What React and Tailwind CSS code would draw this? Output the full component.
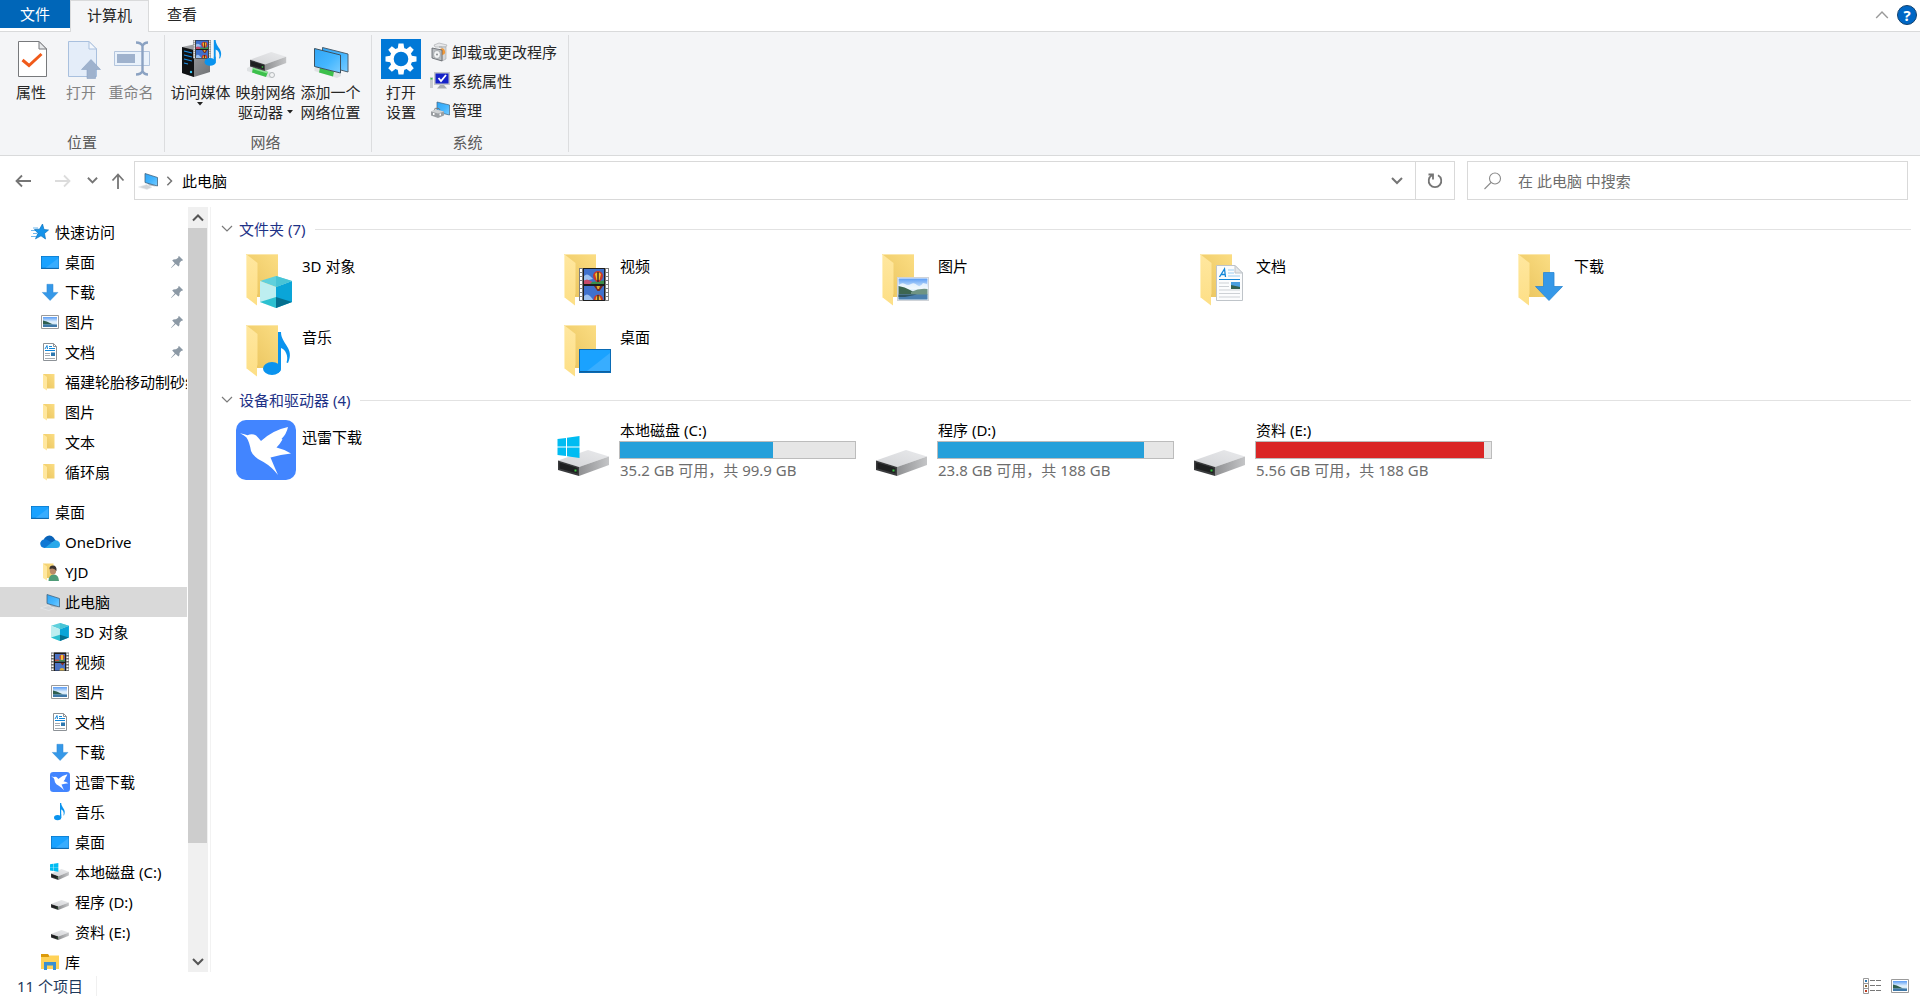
import React from 'react'

/* ---------- shared gradients ---------- */

const Gradients = () => (
  <svg className="absolute w-0 h-0" aria-hidden="true">
    <defs>
      <linearGradient id="folderBack" x1="0" y1="1" x2="1" y2="0">
        <stop offset="0" stopColor="#e9c35c" />
        <stop offset="1" stopColor="#fbdd83" />
      </linearGradient>
      <linearGradient id="folderFlap" x1="0" y1="0" x2="0" y2="1">
        <stop offset="0" stopColor="#ffe79f" />
        <stop offset="1" stopColor="#fddf86" />
      </linearGradient>
      <linearGradient id="screenBlue" x1="0" y1="0" x2="1" y2="1">
        <stop offset="0" stopColor="#31a5f5" />
        <stop offset="0.55" stopColor="#44b6ff" />
        <stop offset="1" stopColor="#7accff" />
      </linearGradient>
      <linearGradient id="driveSide" x1="0" y1="0" x2="1" y2="0">
        <stop offset="0" stopColor="#8f9092" />
        <stop offset="1" stopColor="#c4c5c7" />
      </linearGradient>
      <linearGradient id="driveTop" x1="0" y1="1" x2="1" y2="0">
        <stop offset="0" stopColor="#d3d4d7" />
        <stop offset="1" stopColor="#e9eaec" />
      </linearGradient>
      <linearGradient id="sky" x1="0" y1="0" x2="0" y2="1">
        <stop offset="0" stopColor="#5b9df5" />
        <stop offset="0.5" stopColor="#e4f2fc" />
        <stop offset="1" stopColor="#b8d6ec" />
      </linearGradient>
      <linearGradient id="towerSide" x1="0" y1="0" x2="1" y2="1">
        <stop offset="0" stopColor="#a9abae" />
        <stop offset="1" stopColor="#6f7174" />
      </linearGradient>
    </defs>
  </svg>
)

/* ---------- artwork, each in its own box ---------- */

// 32 x 32
const CubeArt = () => (
  <g>
    <path d="M16 0 32 5 16 11 0 5Z" fill="#5fd0dc" />
    <path d="M0 5 16 11V32L0 26Z" fill="#bdeef0" />
    <path d="M32 5 16 11V32L32 26Z" fill="#0aa5d8" />
    <path d="M16 0 32 5 16 11Z" fill="#48c4d6" />
    <path d="M0 26 16 21V32Z" fill="#2cc0d0" />
    <path d="M32 26 16 21V32Z" fill="#05708f" />
  </g>
)

// 30 x 33
const FilmArt = () => (
  <g>
    <path d="M0 0H30V33H0Z" fill="#7d7d7d" />
    <path d="M4 0H26V33H4Z" fill="#1d1d1d" />
    {[1, 5, 9, 13, 17, 21, 25, 29].map((y) => (
      <path key={y} d={`M1 ${y}h2v3h-2zM27 ${y}h2v3h-2z`} fill="#fff" />
    ))}
    <path d="M5 1H25V16H5ZM5 18H25V32H5Z" fill="#3f70cc" />
    <path d="M5 8Q8 5 11 8T14 11L5 13Z" fill="#9cc0f0" />
    <path d="M5 12.500 8 11.500 13 13.500V16H5Z" fill="#c64a6a" />
    <path d="M13 14 25 12.500V16H11Z" fill="#3a8f4a" />
    <path d="M14 8A5 5 0 0 1 24 8Q24 11 20.500 14H17.500Q14 11 14 8Z" fill="#c9382c" />
    <path d="M16 6Q19 2.500 22 6L20.500 12H17.500Z" fill="#f0c030" />
    <path d="M18.300 4h1.400v10h-1.400z" fill="#2a2320" />
    <path d="M15 18H24L20.500 23H18.500Z" fill="#7a2a20" />
    <path d="M17.500 18H21L20 21H18.500Z" fill="#e0b030" />
    <path d="M5 28Q8 25 11 28T14 32H5Z" fill="#9cc0f0" />
    <path d="M14.500 32A4.700 5.500 0 0 1 24 32Z" fill="#c9382c" />
    <path d="M16.500 32Q17 27.500 19 27.500T22 32Z" fill="#f0c030" />
    <path d="M18.300 27h1.400v5h-1.400z" fill="#2a2320" />
  </g>
)

// 28 x 43
const NoteArt = () => (
  <g fill="#0a93ee">
    <path d="M15 0H18C18 12 32 16 25 31L23.500 30.500C26 24 22 17 18 16V36H15Z" />
    <ellipse cx="9" cy="36.500" rx="9" ry="6.500" />
    <path d="M15 28H18V37Q18 39 15 41Z" />
  </g>
)

// 32 x 24
const DesktopArt = () => (
  <g>
    <path d="M0 0H32V24H0Z" fill="#0a6bb5" />
    <path d="M1 1H31V22H1Z" fill="#1aa2ff" />
    <path d="M31 4V22H8Z" fill="#38adff" />
    <path d="M1 22H31V23H1Z" fill="#0d5f9f" />
  </g>
)

// 32 x 24
const PictureArt = () => (
  <g>
    <path d="M0 0H32V24H0Z" fill="#cfd3d8" />
    <path d="M1 1H31V23H1Z" fill="#fff" />
    <path d="M1.500 1.500H30.500V22.500H1.500Z" fill="url(#sky)" />
    <path d="M2 8Q5 5 8 7T14 7T20 8T26 6L30 7V12H2Z" fill="#f4fafe" opacity="0.8" />
    <path d="M1.500 9Q8 10 13 13T26 17.500H1.500Z" fill="#3d6650" />
    <path d="M14 15Q22 11 30.500 12V18H14Z" fill="#6f9483" />
    <path d="M1.500 17.500H30.500V22.500H1.500Z" fill="#4a7fae" />
    <path d="M1.500 17.500H20L8 20H1.500Z" fill="#2f5664" />
  </g>
)

// 27 x 36
const DocumentArt = () => (
  <g>
    <path d="M0.500 0.500H19L26.500 8V35.500H0.500Z" fill="#fbfcfd" stroke="#bfc4c9" />
    <path d="M19 0.500V8H26.500Z" fill="#e4e7ea" stroke="#bfc4c9" />
    <path d="M3.500 12 8.500 4 9.500 12M5 9.500H9.500" fill="none" stroke="#1286d8" strokeWidth="1.300" />
    <path d="M12 5H18M12 8H18M12 11H24" stroke="#9ccdf0" />
    <path d="M3 14.500H24" stroke="#1286d8" />
    <path d="M3 18H13M3 21.500H13M3 25H24M3 28.500H24M3 32H24" stroke="#cdd1d5" />
    <path d="M15 17H24V24H15Z" fill="#4b9fe0" />
    <path d="M15 20 24 22V24H15Z" fill="#33604f" />
  </g>
)

// 28 x 29
const DownloadArt = () => (
  <path d="M8.500 0.500H19V14.500H27.500L14 28.500 0.500 14.500H8.500Z" fill="#3598e8" stroke="#2a86d2" strokeWidth="0.800" />
)

// 52 x 26
const DriveArt = () => (
  <g>
    <path d="M0 10.500 30 0 51 6.500 21 17Z" fill="url(#driveTop)" />
    <path d="M21 17 51 6.500V15L21 26Z" fill="url(#driveSide)" />
    <path d="M0 10.500 21 17V26L0 20Z" fill="#3a3b3d" />
    <path d="M1.500 12.500 19.500 18V23.500L1.500 18.500Z" fill="#1e1f20" />
    <path d="M16.500 19.500h2v2h-2z" fill="#36c440" />
  </g>
)

// 22 x 22
const WindowsArt = () => (
  <path d="M0 3 8.500 2V10.500H0ZM9.500 1.800 22 0V10.500H9.500ZM0 11.500H8.500V20L0 19ZM9.500 11.500H22V22L9.500 20.200Z" fill="#00bcf2" />
)

// 60 x 60
const ThunderArt = () => (
  <g>
    <rect width="60" height="60" rx="10" fill="#4285ff" />
    <path
      d="M4 13.300Q9 14.500 11.500 15.200 18 12.500 22 17.500L25 21Q37 10 52 7 50.500 14 45.500 19L46.500 19.500Q44 24 40.500 27.500 49 29.500 55 33.500 45 34.500 34.500 37.500 38 46 42 55 36 47 27.500 42 17 37 15 31 13.500 22 10.500 17.500 8 15 4 13.300Z"
      fill="#fff"
    />
  </g>
)

// 60 x 60
const FolderArt = () => (
  <g>
    <path d="M10 5H42V48H20Z" fill="url(#folderBack)" />
    <path d="M10 5.500H42" stroke="#fbe7ab" />
    <path d="M10 5 21.500 14V45L21 46V56.500L10 48Z" fill="url(#folderFlap)" />
    <path d="M10.500 6V48" stroke="#fff0bf" />
  </g>
)

// 20 x 20
const ComputerArt = () => (
  <g>
    <path d="M0.500 16 8.700 13.500 14 16.300 9 18.500Z" fill="#d0d4d8" stroke="#e9ebed" strokeWidth="0.600" />
    <path d="M9 11.500 15 13.500 18 15.500 11 14.500Z" fill="#b7bcc2" />
    <path d="M7 2.500 19.500 6.500V15L7 11.500Z" fill="url(#screenBlue)" stroke="#44657f" strokeWidth="0.800" />
  </g>
)

/* ---------- folder + overlay, 60px ---------- */

const overlays = {
  cube: <g transform="translate(24 27)"><CubeArt /></g>,
  film: <g transform="translate(25 19)"><FilmArt /></g>,
  picture: <g transform="translate(25 28)"><PictureArt /></g>,
  document: <g transform="translate(26 16)"><DocumentArt /></g>,
  download: <g transform="translate(27 23)"><DownloadArt /></g>,
  note: <g transform="translate(27 12)"><NoteArt /></g>,
  desktop: <g transform="translate(25 29)"><DesktopArt /></g>,
}

const Tile = ({ kind }) => (
  <svg viewBox="0 0 60 60" className="w-[60px] h-[60px] shrink-0">
    {kind === 'thunder' && <ThunderArt />}
    {kind === 'drive' && <g transform="translate(4 30)"><DriveArt /></g>}
    {kind === 'system' && (
      <g>
        <g transform="translate(4 30)"><DriveArt /></g>
        <g transform="translate(3.500 16)"><WindowsArt /></g>
      </g>
    )}
    {overlays[kind] && (
      <g>
        <FolderArt />
        {overlays[kind]}
      </g>
    )}
  </svg>
)

/* ---------- 20px tree icons ---------- */

const treeArt = {
  star: (
    <g>
      <path d="M3 6H8M1 8.500H6M3 11.500H7M1 14.500H6" stroke="#6fb8ee" strokeWidth="1.200" />
      <path d="M12.500 2 14 7.500 18.500 8 14.500 11.500 15.500 17 11 13.800 5.500 16.800 8 11.300 4.500 7.500 9.500 7.200Z" fill="#1593ea" stroke="#0b72be" strokeWidth="0.700" />
    </g>
  ),
  desktop: <g transform="translate(1 4) scale(0.560 0.540)"><DesktopArt /></g>,
  download: <g transform="translate(2 2) scale(0.580 0.580)"><DownloadArt /></g>,
  picture: (
    <g>
      <path d="M1.500 3.500H18.500V16.500H1.500Z" fill="#fff" stroke="#9a9a9a" />
      <path d="M3 5H17V15H3Z" fill="url(#sky)" />
      <path d="M3 8.500Q7 9 10 11T17 12.500H3Z" fill="#2f5f50" />
      <path d="M3 12.500H17V15H3Z" fill="#3e78a8" />
    </g>
  ),
  document: (
    <g>
      <path d="M3.500 1.500H13.500L16.500 4.500V18.500H3.500Z" fill="#fff" stroke="#8d9297" />
      <path d="M13.500 1.500V4.500H16.500" fill="none" stroke="#8d9297" />
      <path d="M5 7 7 3.500 7.500 7M9 4.500H12M9 6.500H15M5 8.500H15" fill="none" stroke="#1286d8" />
      <path d="M5 11.500H10M5 13.500H10M5 16.500H15" stroke="#a5abb1" />
      <path d="M11 10.500h4v3.500h-4z" fill="#2d78b0" />
    </g>
  ),
  folder: (
    <g>
      <path d="M3 2H14.500V16.500H7Z" fill="url(#folderBack)" />
      <path d="M3 2 7 5V18.500L3 16Z" fill="#ffe79f" />
    </g>
  ),
  cloud: (
    <g>
      <path d="M4 10.500A5.500 5.500 0 0 1 13.500 5.500L16 9 6 13Z" fill="#0a63b8" />
      <path d="M4.500 16A4.400 4.400 0 1 1 6.500 7.600L14 12 11 16Z" fill="#0f78d4" />
      <path d="M6 15 13.500 9.300A4 4 0 0 1 20 12.500Q20 16 16.500 16H4.500Z" fill="#28a8ea" />
    </g>
  ),
  user: (
    <g>
      <path d="M3 1.500H13.500V16H7Z" fill="url(#folderBack)" />
      <path d="M3 1.500 7 4.500V18.500L3 16Z" fill="#ffe79f" />
      <path d="M8.500 19Q8.500 13 13.500 12.500T19 19Z" fill="#4f9c78" />
      <ellipse cx="13" cy="8.500" rx="3.200" ry="4" fill="#b98a68" />
      <path d="M9.500 7.500Q9 3.500 13 3.500T16.500 9Q15 6.500 12.500 6.500T9.500 7.500Z" fill="#3b3330" />
    </g>
  ),
  computer: <ComputerArt />,
  cube: <g transform="translate(1 1) scale(0.560 0.560)"><CubeArt /></g>,
  film: (
    <g>
      <path d="M1 0.500H19V19H1Z" fill="#6f6f6f" />
      <path d="M4 0.500H16V19H4Z" fill="#1d1d1d" />
      {[1.5, 4.5, 7.5, 10.5, 13.5, 16.5].map((y) => (
        <path key={y} d={`M1.500 ${y}h2v1.600h-2zM16.500 ${y}h2v1.600h-2z`} fill="#fff" />
      ))}
      <path d="M5 2H15V9.500H5ZM5 11H15V18.500H5Z" fill="#4a72c4" />
      <path d="M5 8H15V9.500H5Z" fill="#4a8a4a" />
      <path d="M5 7.500H9V9H5Z" fill="#c8503c" />
      <circle cx="12" cy="5" r="2.600" fill="#c8502c" />
      <path d="M11 3h2v5h-2z" fill="#ecc23a" />
      <path d="M10.500 11H14.500L12.500 13.500Z" fill="#8a3020" />
      <path d="M9.500 18.500A2.500 2.500 0 0 1 14.500 18.500Z" fill="#e0b030" />
    </g>
  ),
  thunder: <g transform="scale(0.333)"><ThunderArt /></g>,
  note: <g transform="translate(4 1) scale(0.400 0.400)"><NoteArt /></g>,
  system: (
    <g>
      <g transform="translate(1 7) scale(0.350 0.420)"><DriveArt /></g>
      <g transform="translate(0 1) scale(0.380 0.400)"><WindowsArt /></g>
    </g>
  ),
  drive: <g transform="translate(1 8) scale(0.350 0.380)"><DriveArt /></g>,
  library: (
    <g>
      <path d="M1 2H8L9.500 4H12V8H1Z" fill="#dc9a0a" />
      <path d="M1 5H8.500L10 3.500H19V17H1Z" fill="#ffd257" />
      <path d="M4 10H16V18H13V13.500H7V18H4Z" fill="#3a8fd2" />
    </g>
  ),
}

const TreeIcon = ({ kind }) => (
  <svg viewBox="0 0 20 20" className="w-5 h-5 shrink-0">{treeArt[kind]}</svg>
)

const Pin = () => (
  <svg viewBox="0 0 14 14" className="w-[14px] h-[14px] mr-[3px] shrink-0">
    <path d="M9 1 13 5 12 6 11.300 5.700 9.500 8Q10 10.500 8.500 11.500L5.700 9 1.300 13 1 12.700 4.800 8.200 2.200 5.500Q3.500 4 6 4.300L8.500 2.600 8 2Z" fill="#8c99a5" />
  </svg>
)

const Chevron = ({ className, d = 'M1 3 6 8 11 3', width = '1.500' }) => (
  <svg viewBox="0 0 12 12" className={className} fill="none" stroke="currentColor" strokeWidth={width}>
    <path d={d} />
  </svg>
)

const DropArrow = () => (
  <svg viewBox="0 0 6 4" className="w-[6px] h-1 shrink-0">
    <path d="M0 0H6L3 3.500Z" fill="#222" />
  </svg>
)

/* ---------- ribbon ---------- */

const ribbonArt = {
  properties: (
    <g>
      <path d="M7.500 2.500H28L35.500 10V37.500H7.500Z" fill="#fff" stroke="#77797c" />
      <path d="M28 2.500V10H35.500Z" fill="#e8eaec" stroke="#77797c" />
      <path d="M11.500 21 18 26.500 30.500 15" fill="none" stroke="#f05a1a" strokeWidth="3" />
    </g>
  ),
  open: (
    <g>
      <path d="M7.500 2.500H28L35.500 10V37.500H7.500Z" fill="#e4edf9" stroke="#a9c0de" />
      <path d="M28 2.500V10H35.500Z" fill="#f4f8fd" stroke="#a9c0de" />
      <path d="M30 20.500 39.500 30.500H34.500V39.500H26V30.500H20.500Z" fill="#9fb2cd" stroke="#8ba2c2" strokeWidth="0.600" />
    </g>
  ),
  rename: (
    <g>
      <path d="M3.500 12.500H38.500V26.500H3.500Z" fill="#eaf2fb" stroke="#b3c5dd" />
      <path d="M6 15H24V24H6Z" fill="#9fb2cd" />
      <path d="M25 3.500Q30 3.500 31.500 7 33 3.500 37 3.500M31.500 6V33M25 35.500Q30 35.500 31.500 32 33 35.500 37 35.500" fill="none" stroke="#8ba2c2" strokeWidth="2.400" />
    </g>
  ),
  media: (
    <g>
      <path d="M1 8 15 5 29 8V33L13 38 1 34Z" fill="url(#towerSide)" />
      <path d="M1 8 13 11V38L1 34Z" fill="#101214" />
      <path d="M3 12 11 14M3 16 11 18M3 20 11 22M3 24 7 25" stroke="#1e8fe8" strokeWidth="1.200" />
      <circle cx="10" cy="33" r="1.200" fill="#3ac8f5" />
      <g transform="translate(12 1) scale(0.600 0.560)"><FilmArt /></g>
      <g transform="translate(23.500 1) scale(0.620 0.600)"><NoteArt /></g>
    </g>
  ),
  netDrive: (
    <g>
      <path d="M1 29 5 27 28 34V38L24 39 1 32Z" fill="#dfe2e4" />
      <path d="M7 28.500 22 33 20 38 6 33.500Z" fill="#3cc04b" />
      <path d="M7 28.500 22 33 21.500 34.500 6.500 30Z" fill="#8ee296" />
      <circle cx="26" cy="36" r="2.500" fill="#f2f3f4" stroke="#b5b9bc" />
      <g transform="translate(4 13) scale(0.710 0.730)"><DriveArt /></g>
    </g>
  ),
  netPlace: (
    <g>
      <path d="M11.500 8.500 37 15V33L11.500 26Z" fill="url(#screenBlue)" stroke="#4b5f6e" />
      <path d="M3.500 29 8 27 30 34V37L26 39 3.500 32Z" fill="#dfe2e4" />
      <path d="M9 28.500 23 32.500 22 37.500 8 33.500Z" fill="#3cc04b" />
      <path d="M3.500 9.500 29.500 16V34L3.500 27.500Z" fill="url(#screenBlue)" stroke="#3d5260" />
    </g>
  ),
  settings: (
    <g>
      <path d="M0 0H40V40H0Z" fill="#0078d7" />
      {[0, 45, 90, 135, 180, 225, 270, 315].map((a) => (
        <path key={a} d="M17.500 4.500H22.500L23.500 11H16.500Z" transform={`rotate(${a} 20 20)`} fill="#fff" />
      ))}
      <circle cx="20" cy="20" r="9.300" fill="none" stroke="#fff" strokeWidth="4" />
    </g>
  ),
  uninstall: (
    <g>
      <path d="M4 3 9 1 17 3 16 5H5Z" fill="#e7e8ea" stroke="#a3a6a9" strokeWidth="0.600" />
      <path d="M9 5H16V17L12 19V5Z" fill="#d5d7d9" stroke="#a3a6a9" strokeWidth="0.600" />
      <path d="M10 7Q14 5 15 9T11 13Z" fill="#f29a3a" />
      <path d="M2 6 12 8V19L2 16Z" fill="#b9bdc1" stroke="#5c6064" strokeWidth="0.800" />
      <ellipse cx="7" cy="12.500" rx="3.400" ry="4" fill="#f2f4f5" stroke="#8a8e92" strokeWidth="0.600" />
      <circle cx="7" cy="12.500" r="1" fill="#8a8e92" />
    </g>
  ),
  sysProps: (
    <g>
      <path d="M0 6H3V17H0Z" fill="#c9cccf" />
      <path d="M0.500 7h2v1.500h-2z" fill="#3cc04b" />
      <path d="M4 1H20V14H4Z" fill="#c3c6c9" />
      <path d="M5.500 2.500H18.500V12.500H5.500Z" fill="#1522c8" />
      <path d="M8.500 7 11 10 16 4" fill="none" stroke="#fff" strokeWidth="1.800" />
      <path d="M10 14H14L17 17.500H7Z" fill="#a9adb1" />
    </g>
  ),
  manage: (
    <g>
      <path d="M7 2 19.500 5V15L7 12Z" fill="url(#screenBlue)" stroke="#44657f" strokeWidth="0.700" />
      <path d="M1 11.500 6 9.500 14 11.500V15.500L8 18 1 15.500Z" fill="#9b9fa3" />
      <path d="M1 11.500 6 9.500 14 11.500 8 13.500Z" fill="#cfd2d4" />
      <path d="M4 9.500Q5 7.500 9 8.500L10 10" fill="none" stroke="#73777b" />
      <path d="M3 13h1.500v2h-1.500zM9.500 13.500h1.500v2h-1.500z" fill="#fff" />
    </g>
  ),
}

const RibbonIcon = ({ kind }) => (
  <svg viewBox="0 0 40 40" className="w-10 h-10 overflow-visible">{ribbonArt[kind]}</svg>
)

const RibbonButton = ({ kind, width, lines, arrow, disabled }) => (
  <button
    disabled={disabled}
    className={`${width} flex flex-col items-center gap-[3px] leading-5 whitespace-nowrap ${disabled ? 'text-[#838383]' : 'text-[#262626]'}`}
  >
    <RibbonIcon kind={kind} />
    <span className="flex flex-col items-center">
      {lines.map((line, i) => (
        <span key={line} className="flex items-center gap-1">
          {line}
          {arrow === 'inline' && i === lines.length - 1 && <DropArrow />}
        </span>
      ))}
      {arrow === 'below' && <DropArrow />}
    </span>
  </button>
)

const RibbonGroup = ({ label, className, children }) => (
  <section className={`flex flex-col justify-between border-r border-[#dcdddf] my-[3px] pt-1 ${className}`}>
    <div className="flex items-start">{children}</div>
    <div className="text-center leading-5 text-[#5a5a5a]">{label}</div>
  </section>
)

const systemTools = [
  { kind: 'uninstall', label: '卸载或更改程序' },
  { kind: 'sysProps', label: '系统属性' },
  { kind: 'manage', label: '管理' },
]

const Ribbon = () => (
  <div className="flex h-[124px] shrink-0 bg-[#f4f5f7] border-b border-[#d9dadb]">
    <RibbonGroup label="位置" className="w-[165px] px-[6px]">
      <RibbonButton kind="properties" width="w-[50px]" lines={['属性']} />
      <RibbonButton kind="open" width="w-[50px]" lines={['打开']} disabled />
      <RibbonButton kind="rename" width="w-[50px]" lines={['重命名']} disabled />
    </RibbonGroup>
    <RibbonGroup label="网络" className="w-[207px] pl-[3px] pr-2">
      <RibbonButton kind="media" width="w-[65px]" lines={['访问媒体']} arrow="below" />
      <RibbonButton kind="netDrive" width="w-[65px]" lines={['映射网络', '驱动器']} arrow="inline" />
      <RibbonButton kind="netPlace" width="w-[65px]" lines={['添加一个', '网络位置']} />
    </RibbonGroup>
    <RibbonGroup label="系统" className="w-[197px] pl-[3px] pr-2">
      <RibbonButton kind="settings" width="w-[52px]" lines={['打开', '设置']} />
      <div className="flex flex-col ml-[3px] -mt-0.5">
        {systemTools.map((tool) => (
          <button key={tool.kind} className="flex items-center gap-[2px] h-[29px] leading-5 text-[#262626] whitespace-nowrap">
            <svg viewBox="0 0 20 20" className="w-5 h-5">{ribbonArt[tool.kind]}</svg>
            {tool.label}
          </button>
        ))}
      </div>
    </RibbonGroup>
  </div>
)

const TabBar = () => (
  <div className="flex h-8 shrink-0 leading-5 border-b border-[#d9dadb]">
    <button className="w-[70px] h-7 bg-[#0066b8] text-white">文件</button>
    <button className="w-[79px] h-8 pb-1 bg-[#f4f5f7] border-x border-t border-[#d9dadb] text-[#262626]">计算机</button>
    <button className="w-[66px] h-[31px] pb-1 text-[#262626]">查看</button>
    <div className="ml-auto flex items-center gap-2 h-[30px] pr-[3px]">
      <button aria-label="最小化功能区" className="text-[#9a9a9a]">
        <Chevron className="w-[14px] h-[14px]" d="M1 8.500 6 3.500 11 8.500" width="1.200" />
      </button>
      <button className="w-5 h-5 rounded-full bg-[#0067c5] border border-[#12416e] text-white text-[15px] leading-4 font-bold">?</button>
    </div>
  </div>
)

/* ---------- address row ---------- */

const Arrow = ({ d, className }) => (
  <svg viewBox="0 0 16 16" className={className} fill="none" stroke="currentColor" strokeWidth="1.800">
    <path d={d} />
  </svg>
)

const AddressRow = () => (
  <div className="flex items-center h-[39px] mt-[5px] shrink-0 pr-3 text-[#757575]">
    <div className="flex items-center w-[134px] pl-[15px] shrink-0">
      <button aria-label="后退"><Arrow className="w-4 h-4" d="M16 8H1.500M7 2.500 1.500 8 7 13.500" /></button>
      <button aria-label="前进" className="ml-6 text-[#dcdcdc]"><Arrow className="w-4 h-4" d="M0 8H14.500M9 2.500 14.500 8 9 13.500" /></button>
      <button aria-label="最近" className="ml-4"><Chevron className="w-[11px] h-[11px]" width="2" /></button>
      <button aria-label="上移" className="ml-3"><Arrow className="w-4 h-4" d="M8 16V1.500M2.500 7.500 8 1.500 13.500 7.500" /></button>
    </div>
    <div className="flex flex-1 items-center h-full border border-[#d9d9d9]">
      <div className="flex flex-1 items-center pl-[3px]">
        <TreeIcon kind="computer" />
        <Chevron className="w-[10px] h-[10px] ml-[6px]" d="M4 1 9 6 4 11" width="1.800" />
        <span className="ml-[8px] text-black">此电脑</span>
      </div>
      <button aria-label="展开" className="px-3"><Chevron className="w-3 h-3" width="2" /></button>
      <button aria-label="刷新" className="flex items-center justify-center w-[39px] h-full border-l border-[#d9d9d9]">
        <svg viewBox="0 0 16 16" className="w-4 h-4" fill="none" stroke="currentColor" strokeWidth="1.800">
          <path d="M11 2.300A6.300 6.300 0 1 1 5 2.300M1.500 1.500H6V6.500" />
        </svg>
      </button>
    </div>
    <label className="flex items-center w-[441px] h-full ml-3 pl-4 border border-[#d9d9d9]">
      <svg viewBox="0 0 18 18" className="w-[18px] h-[18px] mr-4 shrink-0" fill="none" stroke="#8a8a8a" strokeWidth="1.100">
        <circle cx="11" cy="6.500" r="5.500" />
        <path d="M7 10.500 0.500 17" />
      </svg>
      <input type="search" aria-label="搜索" placeholder="在 此电脑 中搜索" className="flex-1 min-w-0 bg-transparent outline-none placeholder:text-[#6d6d6d]" />
    </label>
  </div>
)

/* ---------- navigation tree ---------- */

const quickAccess = [
  { label: '快速访问', icon: 'star', level: 0 },
  { label: '桌面', icon: 'desktop', level: 1, pinned: true },
  { label: '下载', icon: 'download', level: 1, pinned: true },
  { label: '图片', icon: 'picture', level: 1, pinned: true },
  { label: '文档', icon: 'document', level: 1, pinned: true },
  { label: '福建轮胎移动制砂线', icon: 'folder', level: 1 },
  { label: '图片', icon: 'folder', level: 1 },
  { label: '文本', icon: 'folder', level: 1 },
  { label: '循环扇', icon: 'folder', level: 1 },
]

const desktopTree = [
  { label: '桌面', icon: 'desktop', level: 0 },
  { label: 'OneDrive', icon: 'cloud', level: 1 },
  { label: 'YJD', icon: 'user', level: 1 },
  { label: '此电脑', icon: 'computer', level: 1, selected: true },
  { label: '3D 对象', icon: 'cube', level: 2 },
  { label: '视频', icon: 'film', level: 2 },
  { label: '图片', icon: 'picture', level: 2 },
  { label: '文档', icon: 'document', level: 2 },
  { label: '下载', icon: 'download', level: 2 },
  { label: '迅雷下载', icon: 'thunder', level: 2 },
  { label: '音乐', icon: 'note', level: 2 },
  { label: '桌面', icon: 'desktop', level: 2 },
  { label: '本地磁盘 (C:)', icon: 'system', level: 2 },
  { label: '程序 (D:)', icon: 'drive', level: 2 },
  { label: '资料 (E:)', icon: 'drive', level: 2 },
  { label: '库', icon: 'library', level: 1 },
]

const indent = ['pl-[30px]', 'pl-[40px]', 'pl-[50px]']

const TreeRow = ({ item }) => (
  <li>
    <a href="#" className={`flex items-center h-[30px] gap-[5px] ${indent[item.level]} ${item.selected ? 'bg-[#d9d9d9]' : ''}`}>
      <TreeIcon kind={item.icon} />
      <span className="flex-1 min-w-0 overflow-hidden whitespace-nowrap">{item.label}</span>
      {item.pinned && <Pin />}
    </a>
  </li>
)

const Sidebar = () => (
  <div className="flex w-[211px] shrink-0 border-r border-[#f2f2f2]">
    <nav className="w-[187px] overflow-hidden pt-[10px] text-black">
      <ul>{quickAccess.map((item, i) => <TreeRow key={i} item={item} />)}</ul>
      <ul className="mt-[10px]">{desktopTree.map((item, i) => <TreeRow key={i} item={item} />)}</ul>
    </nav>
    <div className="flex flex-col w-5 ml-px bg-[#f0f0f0] text-[#555]">
      <div className="flex items-center justify-center h-[21px] shrink-0"><Chevron className="w-3 h-3" d="M1 8.500 6 3.500 11 8.500" width="2" /></div>
      <div className="flex flex-col flex-1 min-h-0">
        <div className="h-[85%] bg-[#cdcdcd] mr-px" />
      </div>
      <div className="flex items-center justify-center h-[21px] shrink-0"><Chevron className="w-3 h-3" width="2" /></div>
    </div>
  </div>
)

/* ---------- content ---------- */

const folders = [
  { label: '3D 对象', icon: 'cube' },
  { label: '视频', icon: 'film' },
  { label: '图片', icon: 'picture' },
  { label: '文档', icon: 'document' },
  { label: '下载', icon: 'download' },
  { label: '音乐', icon: 'note' },
  { label: '桌面', icon: 'desktop' },
]

const devices = [
  { label: '迅雷下载', icon: 'thunder' },
  { label: '本地磁盘 (C:)', icon: 'system', used: 65, info: '35.2 GB 可用，共 99.9 GB' },
  { label: '程序 (D:)', icon: 'drive', used: 87.5, info: '23.8 GB 可用，共 188 GB' },
  { label: '资料 (E:)', icon: 'drive', used: 97, info: '5.56 GB 可用，共 188 GB' },
]

const Item = ({ item }) => (
  <a href="#" className="flex items-start gap-[6px] h-[60px]">
    <Tile kind={item.icon} />
    {item.info ? (
      <span className="flex flex-col w-[237px] -ml-px leading-5">
        <span className="pl-px">{item.label}</span>
        <span role="progressbar" aria-valuenow={item.used} aria-label={item.label} className="block h-[18px] my-px border border-[#bcbcbc] bg-[#e6e6e6]">
          <span
            className={`block h-full ${item.used > 90 ? 'bg-[#da2626]' : 'bg-[#26a0da]'}`}
            style={{ width: `${item.used}%` }}
          />
        </span>
        <span className="pl-px text-[#6d6d6d] whitespace-nowrap">{item.info}</span>
      </span>
    ) : (
      <span className="pt-[7px] leading-5">{item.label}</span>
    )}
  </a>
)

const Group = ({ title, items }) => (
  <section>
    <h2 className="flex items-center h-10 pl-[10px] pr-[9px] text-[#1e3287] font-normal">
      <Chevron className="w-3 h-3 text-[#7a7a7a]" width="1.200" />
      <span className="ml-[6px] mr-[10px]">{title}</span>
      <span className="flex-1 h-px bg-[#e2e2e2]" />
    </h2>
    <div className="grid grid-cols-[repeat(auto-fill,318px)] gap-y-[11px] pl-[25px]">
      {items.map((item) => <Item key={item.label} item={item} />)}
    </div>
  </section>
)

const StatusBar = () => (
  <footer className="flex items-center h-[29px] shrink-0 pl-[17px] pr-[10px] pb-[2px] text-[#1e395b]">
    <span className="pr-[13px] border-r border-[#f0f0f0] leading-5">11 个项目</span>
    <div className="ml-auto flex items-center gap-2">
      <button aria-label="详细信息">
        <svg viewBox="0 0 20 20" className="w-5 h-5">
          <path d="M1.500 2.500H6.500V17.500H1.500ZM1.500 7.500H6.500M1.500 12.500H6.500" fill="#fff" stroke="#9a9a9a" />
          <path d="M3 4h2v2h-2z" fill="#2d78b0" />
          <path d="M3 9h2v2h-2z" fill="#8a6a3a" />
          <path d="M3 14h2v2h-2z" fill="#c03a20" />
          <path d="M8 4.500H13M14 4.500H19M8 9.500H13M14 9.500H19M8 14.500H13M14 14.500H19" stroke="#777" />
        </svg>
      </button>
      <button aria-label="大图标"><TreeIcon kind="picture" /></button>
    </div>
  </footer>
)

const App = () => (
  <div className="flex flex-col h-screen overflow-hidden bg-white text-black text-[15px] leading-5 font-['Noto_Sans','Noto_Sans_CJK_SC',sans-serif]">
    <Gradients />
    <TabBar />
    <Ribbon />
    <AddressRow />
    <div className="flex flex-1 min-h-0 mt-[7px]">
      <Sidebar />
      <main className="flex-1 min-w-0 pt-[2px]">
        <Group title="文件夹 (7)" items={folders} />
        <Group title="设备和驱动器 (4)" items={devices} />
      </main>
    </div>
    <StatusBar />
  </div>
)

export default App
